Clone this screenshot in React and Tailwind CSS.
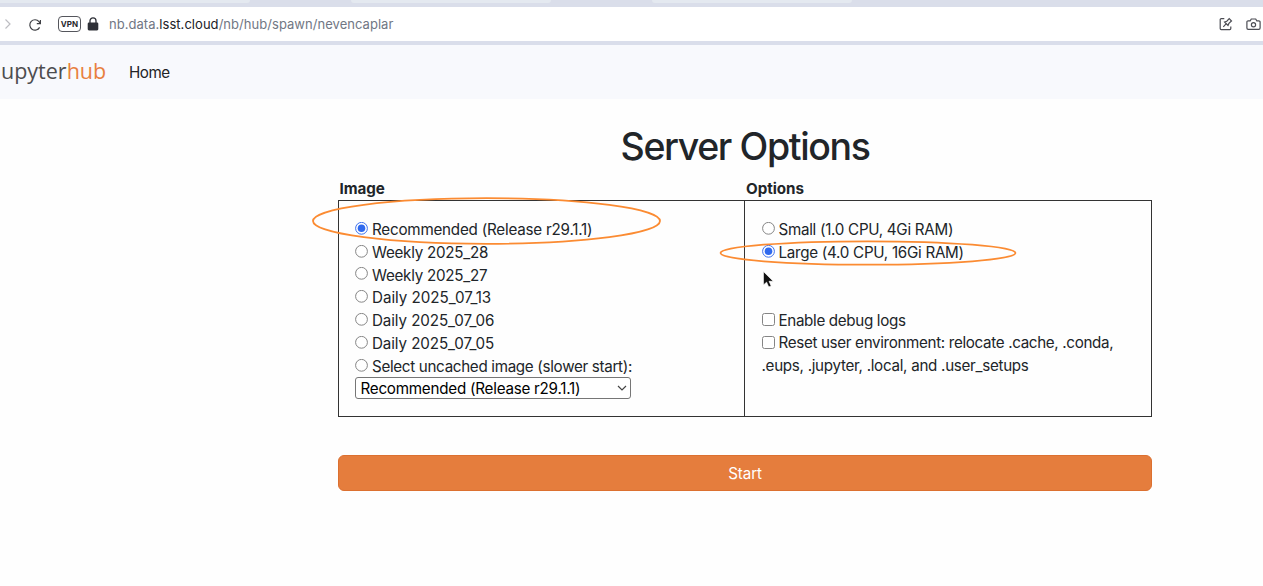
import React from "react";

function Radio({ checked }) {
  return (
    <svg className="mr-[4px] h-[13px] w-[13px] shrink-0" viewBox="0 0 13 13">
      <circle cx="6.5" cy="6.3" r="5.9" fill="white" stroke={checked ? "#3b70ee" : "#858585"} strokeWidth="1" />
      {checked && <circle cx="6.5" cy="6.3" r="3.8" fill="#2f69ee" />}
    </svg>
  );
}

function Choice({ label, checked, spacing = "" }) {
  return (
    <label className="flex h-[22.8px] items-center whitespace-nowrap">
      <Radio checked={checked} />
      <span className={`pt-[3px] leading-[22px] ${spacing}`}>{label}</span>
    </label>
  );
}

function Checkbox() {
  return <span className="mr-[4px] inline-block h-[13px] w-[13px] shrink-0 rounded-[2.5px] border border-[#858585] bg-white" />;
}

function AddressBar() {
  return (
    <div className="flex h-[34px] shrink-0 items-center bg-white">
      <svg className="ml-[4px] h-[12px] w-[8px]" viewBox="0 0 8 12" fill="none" stroke="#bdbdc2" strokeWidth="1.2">
        <path d="M1.5 1.5 6 6 1.5 10.5" />
      </svg>
      <svg className="ml-[16px] mt-px h-[14px] w-[14px]" viewBox="0 0 14 14" fill="none" stroke="#3f4045" strokeWidth="1.2">
        <path d="M11.6 9.4A5.2 5.2 0 1 1 11 3.6L12.2 5.2" />
        <path d="M12.4 2v3.6H8.8" />
      </svg>
      <span className="ml-[16px] mt-[-1px] flex h-[16px] w-[23px] items-center justify-center rounded-[4px] border-[1.5px] border-[#55565c] text-[8px] font-bold leading-none text-[#26272c]">
        VPN
      </span>
      <svg className="ml-[6px] mt-[-1px] h-[14px] w-[12px]" viewBox="0 0 12 14">
        <path d="M3 6V3.8a3 3 0 0 1 6 0V6" fill="none" stroke="#2e3037" strokeWidth="1.3" />
        <rect x="0.7" y="5.4" width="10.6" height="8" rx="1.3" fill="#2e3037" />
      </svg>
      <span className="ml-[10px] mt-[2px] whitespace-nowrap text-[13px] tracking-[0.04px] text-[#717784]">
        nb.data.<span className="text-[#202126]">lsst.cloud</span>/nb/hub/spawn/nevencaplar
      </span>
      <svg className="ml-auto h-[14px] w-[14px]" viewBox="0 0 14 14" fill="none" stroke="#4c4d54" strokeWidth="1.2">
        <path d="M5.3 1.6H2.2a1 1 0 0 0-1 1v9a1 1 0 0 0 1 1h8.6a1 1 0 0 0 1-1V9.6" />
        <path d="M4.3 9.8 6.8 7.2M5.6 5 9 8.4l.9-2 2.6-2.4-2.3-2.3-2.4 2.5z" />
      </svg>
      <svg className="ml-[13px] mr-[2px] h-[14px] w-[15px]" viewBox="0 0 15 14" fill="none" stroke="#4c4d54" strokeWidth="1.2">
        <path d="M2.2 3.8h2L5.3 2h4.4l1.1 1.8h2a1.3 1.3 0 0 1 1.3 1.3v6a1.3 1.3 0 0 1-1.3 1.3H2.2a1.3 1.3 0 0 1-1.3-1.3v-6a1.3 1.3 0 0 1 1.3-1.3z" />
        <circle cx="7.5" cy="7.8" r="2.1" />
      </svg>
    </div>
  );
}

const images = [
  { label: "Recommended (Release r29.1.1)", checked: true, spacing: "tracking-[-0.22px]" },
  { label: "Weekly 2025_28", spacing: "tracking-[-0.26px]" },
  { label: "Weekly 2025_27", spacing: "tracking-[-0.26px]" },
  { label: "Daily 2025_07_13", spacing: "tracking-[-0.03px]" },
  { label: "Daily 2025_07_06", spacing: "tracking-[-0.1px]" },
  { label: "Daily 2025_07_05", spacing: "tracking-[-0.1px]" },
  { label: "Select uncached image (slower start):", spacing: "tracking-[-0.32px]" },
];

export default function App() {
  return (
    <div className="relative flex h-[586px] w-[1263px] flex-col overflow-hidden bg-[#fefefe] font-[Inter,sans-serif] text-[15.2px] text-[#212529]">
      <div className="flex h-[7px] shrink-0 items-start gap-[101px] bg-[#dadeea]">
        <div className="h-[3px] w-[250px] rounded-br-[4px] bg-[#e4e9f0]" />
        <div className="h-[3px] w-[200px] rounded-b-[4px] bg-[#e4e9f0]" />
        <div className="h-[3px] w-[200px] rounded-b-[4px] bg-[#e4e9f0]" />
      </div>
      <AddressBar />
      <div className="h-[4px] shrink-0 bg-[#dadeeb]" />
      <nav className="flex h-[54px] shrink-0 items-center bg-[#f8f9fd]">
        <span className="ml-[1px] mt-[-2px] w-[105px] whitespace-nowrap font-['Open_Sans',sans-serif] text-[21.5px] leading-none text-[#4d4d4f]">
          upyter<span className="text-[#e8803f]">hub</span>
        </span>
        <span className="ml-[23px] mt-[2px] tracking-[-0.45px] text-[#222326]">Home</span>
      </nav>

      <main className="ml-[338px] flex w-[814px] flex-col">
        <h1 className="mt-[25px] h-[46px] whitespace-nowrap text-center text-[37.5px] font-medium leading-[46px] tracking-[-1.38px]">Server Options</h1>
        <div className="mt-[8px] flex h-[22px] items-center font-bold tracking-[-0.05px]">
          <span className="w-[407px] pl-[1.5px]">Image</span>
          <span className="pl-[1px]">Options</span>
        </div>
        <div className="flex h-[217px] border border-[#333] bg-[#fefefe]">
          <section className="w-[406px] border-r border-[#333] pl-[16px] pt-[16px]">
            {images.map((image) => (
              <Choice key={image.label} {...image} />
            ))}
            <div className="flex h-[22px] w-[276px] items-center justify-between rounded-[3px] border border-[#767676] bg-white pl-[4.5px] pr-[3px] text-black">
              <span className="whitespace-nowrap pt-[2px] leading-[20px] tracking-[-0.24px]">Recommended (Release r29.1.1)</span>
              <svg className="h-[8px] w-[10px]" viewBox="0 0 10 8" fill="none" stroke="#444" strokeWidth="1.2">
                <path d="M1 2l4 4 4-4" />
              </svg>
            </div>
          </section>
          <section className="flex-1 pl-[16.5px] pt-[16px]">
            <Choice label="Small (1.0 CPU, 4Gi RAM)" spacing="tracking-[-0.29px]" />
            <Choice label="Large (4.0 CPU, 16Gi RAM)" spacing="tracking-[-0.28px]" checked />
            <div className="h-[45.6px]" />
            <div className="whitespace-nowrap leading-[22.8px]">
              <div className="flex h-[22.8px] items-center"><Checkbox /><span className="pt-[3px] tracking-[-0.34px]">Enable debug logs</span></div>
              <div className="flex h-[22.8px] items-center"><Checkbox /><span className="pt-[3px] tracking-[-0.34px]">Reset user environment: relocate .cache, .conda,</span></div>
              <div className="pt-[1.5px] tracking-[-0.29px]">.eups, .jupyter, .local, and .user_setups</div>
            </div>
          </section>
        </div>
        <button className="mt-[38px] h-[36px] rounded-[6px] border border-[#dc7030] bg-[#e57d3d] pt-[2px] tracking-[-0.1px] text-white">Start</button>
      </main>

      <svg className="pointer-events-none absolute left-0 top-0 h-[586px] w-[1263px]" viewBox="0 0 1263 586" fill="none">
        <ellipse cx="486.5" cy="221" rx="173.5" ry="22.8" stroke="#fb8b32" strokeWidth="1.8" />
        <ellipse cx="868" cy="253" rx="147.5" ry="11.7" stroke="#fb8b32" strokeWidth="1.8" />
        <path d="M763.4 271.5v13.5l3.2-2.8 2.1 4.8 2.5-1.1-2.1-4.6h4.2z" fill="#111" stroke="white" strokeWidth="0.7" />
      </svg>
    </div>
  );
}
